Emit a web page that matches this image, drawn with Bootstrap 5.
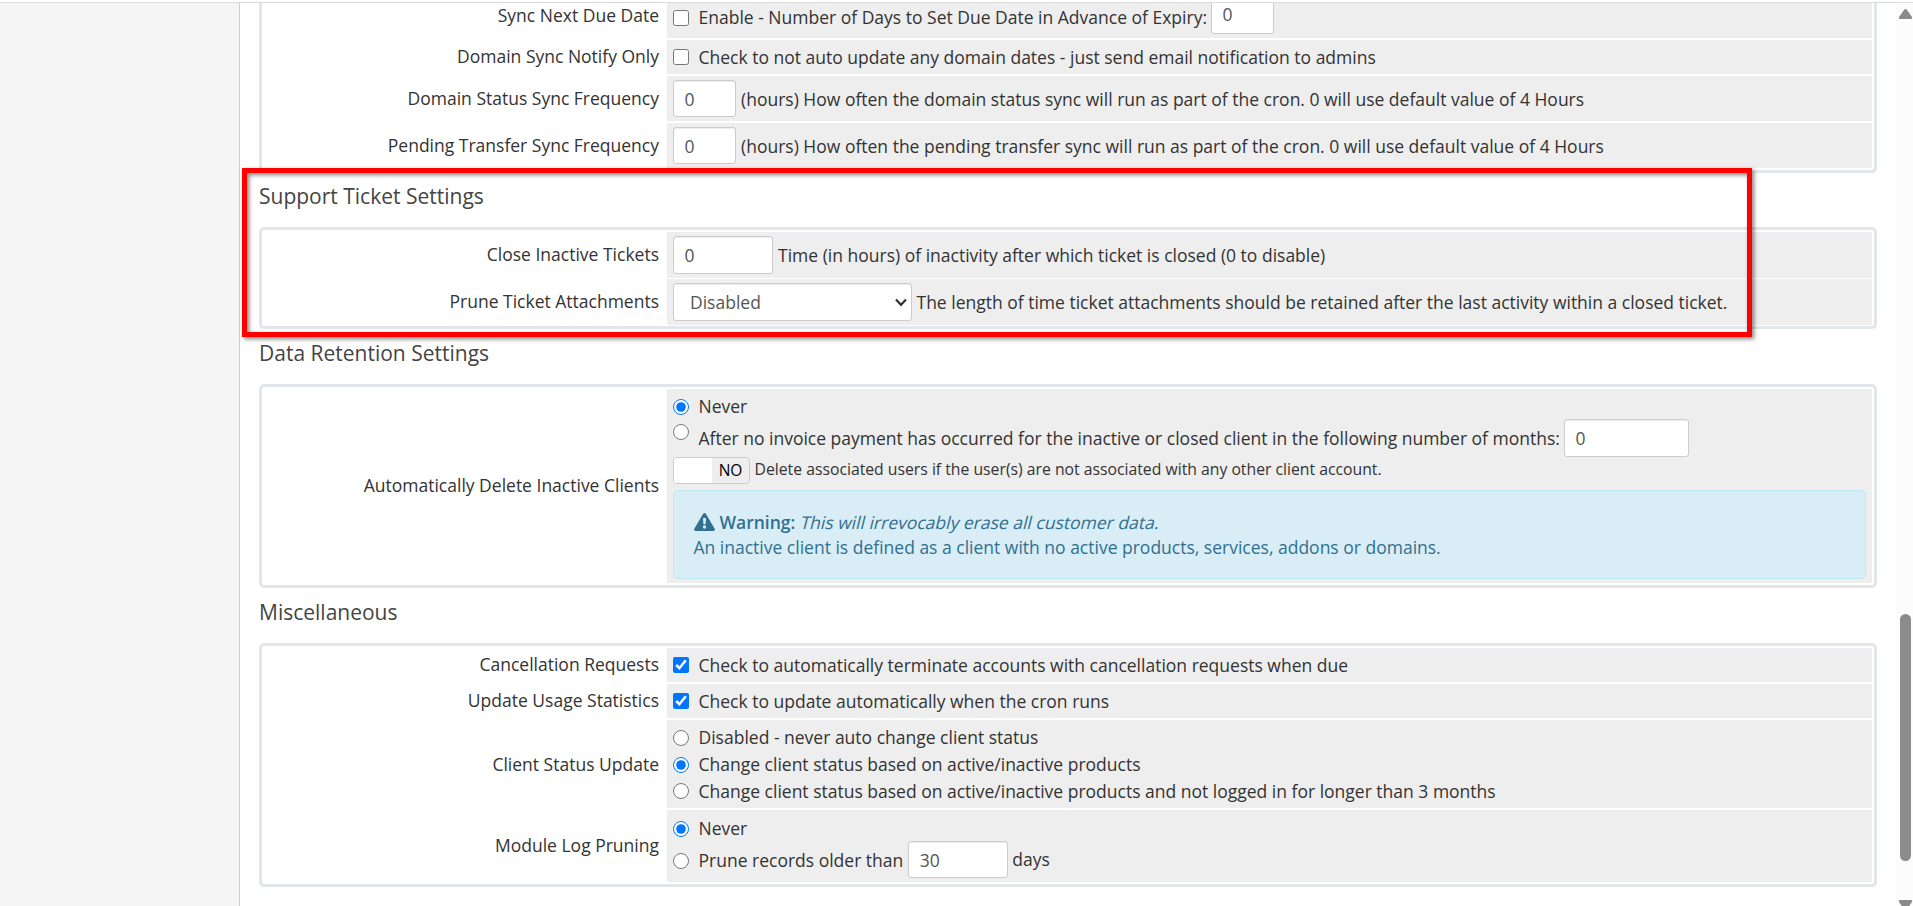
<!DOCTYPE html>
<html lang="en">
<head>
<meta charset="utf-8">
<title>Automation Settings</title>
<link href="https://cdn.jsdelivr.net/npm/bootstrap@5.3.0/dist/css/bootstrap.min.css" rel="stylesheet">
<style>
  body { font-family: "Open Sans", sans-serif; font-size: 17.5px; line-height: 25px; color: #333; background: #fff; }
  .app { height: 906px; }
  .topline { height: 3px; border-bottom: 1px solid #dcdcdc; }
  .side { width: 240px; background: #f5f5f5; border-right: 1px solid #ccc; }
  .content-area { padding: 0 19px; min-width: 0; }
  .scroller { width: 17px; background: #fcfcfc; }
  .scroller svg { display: block; }
  .panel-box { border: 3px solid #e2e5e9; border-radius: 5px; padding: 2px; display: grid; gap: 2px; }
  .panel-first { margin-top: -10px; border-top: 0; padding-top: 0; }
  .heading { font-size: 21px; line-height: 26px; height: 26px; margin: 0; color: #444; font-weight: 400; }
  .h-support { margin: 10px 0 18px; }
  .h-data { margin: 11px 0 18px; }
  .h-misc { margin: 11px 0 18px; }
  .setting { display: grid; grid-template-columns: 401px 1fr; gap: 2px; }
  .setting-label { text-align: right; padding-right: 6px; padding-bottom: 1px; display: flex; align-items: center; justify-content: flex-end; }
  .setting-field { background: #eee; padding: 4px 6px; white-space: nowrap; display: flex; flex-direction: column; justify-content: center; }
  .h45 { height: 45px; } .h34 { height: 34px; } .h88 { height: 88px; } .h72 { height: 72px; } .h194 { height: 194px; }
  .line { display: flex; align-items: center; }
  .drop > span { padding-top: 1px; }
  .tick { width: 16px; height: 16px; margin: 0 9.5px 0 0; accent-color: #0075ff; flex: none; }
  .form-control, .pick { height: 37px; padding: 0 10.5px; font-size: 17.5px; line-height: 25px; color: #555; border: 1px solid #ccc; border-radius: 3px; background: #fff; box-shadow: inset 0 1px 1px rgba(0,0,0,.075); flex: none; }
  .pick { appearance: none; height: 38px; width: 239px; padding: 0 16px; }
  .pick-wrap svg { position: absolute; right: 5px; top: 15px; pointer-events: none; }
  .w63 { width: 63px; } .w100 { width: 100px; } .w125 { width: 125px; }
  .switch { width: 77px; height: 27px; border: 1px solid #ccc; border-radius: 4px; overflow: hidden; background: #eee; font-size: 15.5px; color: #000; flex: none; }
  .switch i { width: 38px; background: #fff; }
  .note { font-size: 15.75px; margin: 0 0 2px 4.5px; }
  .notice { background: #d9edf7; border: 1px solid #bce8f1; border-radius: 5px; color: #31708f; height: 89px; padding: 19px 19.5px; margin: 6px 0 0; }
  .slanted { display: inline-block; transform: skewX(-14deg); margin-left: 1.5px; }
  .marker { position: absolute; left: 242px; top: 168px; width: 1510px; height: 169px; border: 5px solid #f00; filter: drop-shadow(2px 2px 2px rgba(0,0,0,.5)); }
</style>
</head>
<body class="overflow-hidden">
<div class="app d-flex flex-column position-relative overflow-hidden">
  <div class="topline"></div>
  <div class="d-flex flex-grow-1 overflow-hidden">
    <aside class="side flex-shrink-0"></aside>
    <main class="content-area flex-grow-1 overflow-hidden">
      <section class="panel-box panel-first">
        <div class="setting h45">
          <div class="setting-label">Sync Next Due Date</div>
          <div class="setting-field"><label class="line"><input type="checkbox" class="tick mt-1"><span class="pt-1">Enable - Number of Days to Set Due Date in Advance of Expiry:</span><input class="form-control w63 ms-1 pb-1" value="0"></label></div>
        </div>
        <div class="setting h34">
          <div class="setting-label">Domain Sync Notify Only</div>
          <div class="setting-field"><label class="line"><input type="checkbox" class="tick"><span>Check to not auto update any domain dates - just send email notification to admins</span></label></div>
        </div>
        <div class="setting h45">
          <div class="setting-label">Domain Status Sync Frequency</div>
          <div class="setting-field"><div class="line drop"><input class="form-control w63" value="0"><span style="margin-left:5px">(hours) How often the domain status sync will run as part of the cron. 0 will use default value of 4 Hours</span></div></div>
        </div>
        <div class="setting h45">
          <div class="setting-label">Pending Transfer Sync Frequency</div>
          <div class="setting-field"><div class="line drop"><input class="form-control w63" value="0"><span style="margin-left:5px">(hours) How often the pending transfer sync will run as part of the cron. 0 will use default value of 4 Hours</span></div></div>
        </div>
      </section>

      <h2 class="heading h-support">Support Ticket Settings</h2>
      <section class="panel-box">
        <div class="setting h45">
          <div class="setting-label">Close Inactive Tickets</div>
          <div class="setting-field"><div class="line drop"><input class="form-control w100" style="height:38px" value="0"><span style="margin-left:5px">Time (in hours) of inactivity after which ticket is closed (0 to disable)</span></div></div>
        </div>
        <div class="setting h45">
          <div class="setting-label">Prune Ticket Attachments</div>
          <div class="setting-field"><div class="line"><div class="pick-wrap position-relative d-flex"><select class="pick"><option>Disabled</option></select><svg width="12" height="9" viewBox="0 0 12 9" fill="none" stroke="#333" stroke-width="2.2"><path d="M1 1.500 6 6.800 11 1.500"/></svg></div><span style="margin-left:4.5px">The length of time ticket attachments should be retained after the last activity within a closed ticket.</span></div></div>
        </div>
      </section>

      <h2 class="heading h-data">Data Retention Settings</h2>
      <section class="panel-box">
        <div class="setting h194">
          <div class="setting-label" style="padding-bottom:2px">Automatically Delete Inactive Clients</div>
          <div class="setting-field justify-content-start">
            <label class="line" style="margin-top:1px"><input type="radio" name="del" class="tick" checked><span>Never</span></label>
            <label class="line" style="height:38px"><input type="radio" name="del" class="tick" style="margin-bottom:13px"><span>After no invoice payment has occurred for the inactive or closed client in the following number of months:</span><input class="form-control w125 ms-1" value="0" style="height:38px"></label>
            <div class="line"><span class="switch d-flex"><i></i><span class="flex-fill text-center">NO</span></span><span class="note">Delete associated users if the user(s) are not associated with any other client account.</span></div>
            <div class="notice">
              <svg width="21" height="18" viewBox="0 0 21 18" style="vertical-align:-2px;margin-right:5px"><path fill="#31708f" d="M9.2.8c.6-1 2-1 2.6 0l8.9 15c.6 1-.1 2.2-1.300 2.200H1.600C.4 18-.3 16.800.3 15.800Z"/><path fill="#d9edf7" d="M9 5h3l-.4 6.300H9.400Z"/><circle cx="10.500" cy="14" r="1.650" fill="#d9edf7"/></svg><strong class="fw-semibold">Warning:</strong> <span class="slanted">This will irrevocably erase all customer data.</span><br>An inactive client is defined as a client with no active products, services, addons or domains.
            </div>
          </div>
        </div>
      </section>

      <h2 class="heading h-misc">Miscellaneous</h2>
      <section class="panel-box">
        <div class="setting h34">
          <div class="setting-label">Cancellation Requests</div>
          <div class="setting-field"><label class="line"><input type="checkbox" class="tick" checked><span>Check to automatically terminate accounts with cancellation requests when due</span></label></div>
        </div>
        <div class="setting h34">
          <div class="setting-label">Update Usage Statistics</div>
          <div class="setting-field"><label class="line"><input type="checkbox" class="tick" checked><span>Check to update automatically when the cron runs</span></label></div>
        </div>
        <div class="setting h88">
          <div class="setting-label pb-0">Client Status Update</div>
          <div class="setting-field">
            <label class="line" style="height:27px"><input type="radio" name="st" class="tick"><span>Disabled - never auto change client status</span></label>
            <label class="line" style="height:27px"><input type="radio" name="st" class="tick" checked><span>Change client status based on active/inactive products</span></label>
            <label class="line" style="height:26px"><input type="radio" name="st" class="tick"><span>Change client status based on active/inactive products and not logged in for longer than 3 months</span></label>
          </div>
        </div>
        <div class="setting h72">
          <div class="setting-label">Module Log Pruning</div>
          <div class="setting-field justify-content-start">
            <label class="line" style="height:27px;padding-top:2px"><input type="radio" name="ml" class="tick" checked><span>Never</span></label>
            <div class="line"><input type="radio" name="ml" class="tick" style="margin-top:2px"><span style="padding-top:2px">Prune records older than</span><input class="form-control w100" style="margin:0 4px 0 5px" value="30"><span>days</span></div>
          </div>
        </div>
      </section>
    </main>
    <div class="scroller d-flex flex-column flex-shrink-0">
      <svg width="17" height="903" viewBox="0 3 17 903" fill="#8b8b8b"><path d="M9.500 9q.8 0 1.500 1l5 7q.7 2-1 2H4q-1.700 0-1-2l5-7q.7-1 1.500-1Z"/><rect x="4" y="614" width="11" height="247" rx="5.500"/><path d="M4 900h11q1.700 0 1 2l-5 7H8l-5-7q-.7-2 1-2Z"/></svg>
    </div>
  </div>
  <div class="marker"></div>
</div>
<script src="https://cdn.jsdelivr.net/npm/bootstrap@5.3.0/dist/js/bootstrap.bundle.min.js"></script>
</body>
</html>
